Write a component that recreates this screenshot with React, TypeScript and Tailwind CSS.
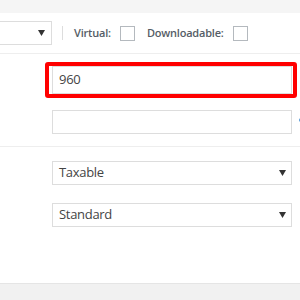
import React from "react";

const Arrow = () => (
  <svg width="7" height="6" viewBox="0 0 7 6" className="shrink-0">
    <path d="M0 0 H7 L3.5 6 Z" fill="#333" />
  </svg>
);

export default function App() {
  return (
    <div
      className="w-[300px] h-[300px] bg-white overflow-hidden flex flex-col text-[#555]"
      style={{ fontFamily: '"Open Sans", "Noto Sans", sans-serif' }}
    >
      <div className="h-[13px] bg-[#f5f5f5] shrink-0" />
      <div className="h-[41px] shrink-0 flex items-center border-b border-[#eee]">
        <div className="w-[52px] h-[24px] border border-[#ddd] border-l-0 bg-white flex items-center justify-end pr-[6px] shrink-0">
          <Arrow />
        </div>
        <div className="ml-[10px] w-px h-[14px] bg-[#ddd]" />
        <span className="ml-[11px] text-[11px] tracking-[-0.2px] font-semibold text-[#555d66]">Virtual:</span>
        <div className="ml-[9px] w-[15px] h-[15px] border border-[#b4b9be] bg-white" />
        <span className="ml-[12px] text-[11px] tracking-[-0.2px] font-semibold text-[#555d66]">Downloadable:</span>
        <div className="ml-[9px] w-[15px] h-[15px] border border-[#b4b9be] bg-white" />
      </div>
      <div className="pl-[45px] pt-[8px] pb-[12px] border-b border-[#eee] shrink-0 relative">
        <div className="w-[252px] h-[36px] border-[4px] border-[#ff0000] rounded-[3px] pl-[3px] pr-[1px] flex items-center">
          <div className="w-full h-[28px] border border-[#ddd] bg-white flex items-center pl-[6px] text-[13px] tracking-[-0.3px] text-[#444]">
            960
          </div>
        </div>
        <div className="ml-[7px] mt-[12px] w-[240px] h-[24px] border border-[#ddd] bg-white" />
        <div className="absolute right-[-3px] top-[64px] w-[4px] h-[4px] rounded-full bg-[#5b9dd9]" />
      </div>
      <div className="pl-[52px] pt-[14px] flex flex-col gap-[18px] shrink-0">
        <div className="w-[240px] h-[24px] border border-[#ddd] bg-white flex items-center justify-between pl-[6px] pr-[5px] text-[13px] tracking-[-0.3px] text-[#444]">
          <span>Taxable</span>
          <Arrow />
        </div>
        <div className="w-[240px] h-[24px] border border-[#ddd] bg-white flex items-center justify-between pl-[6px] pr-[5px] text-[13px] tracking-[-0.3px] text-[#444]">
          <span>Standard</span>
          <Arrow />
        </div>
      </div>
      <div className="flex-1" />
      <div className="h-[17px] bg-[#f1f1f1] border-t border-[#e5e5e5] shrink-0" />
    </div>
  );
}
